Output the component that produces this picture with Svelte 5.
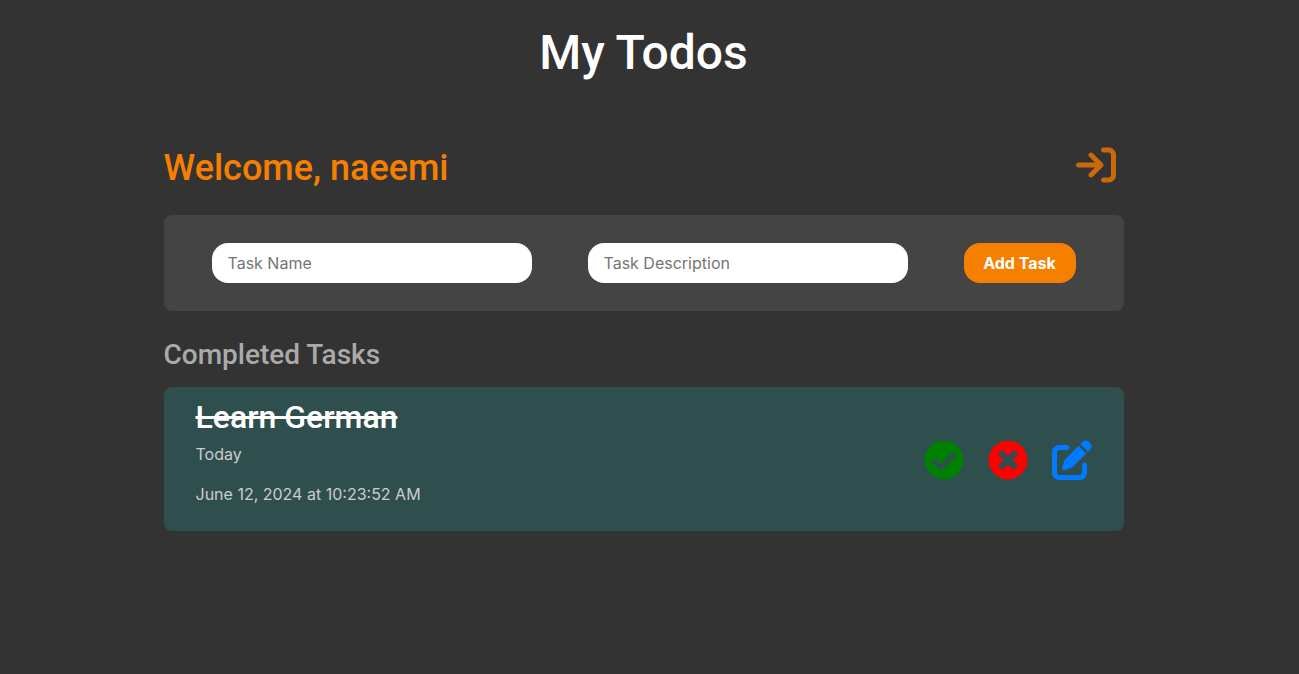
<script>
	let name = '';
	let description = '';
	let nextId = 2;

	let todos = [
		{
			id: 1,
			name: 'Learn German',
			description: 'Today',
			date: 'June 12, 2024 at 10:23:52 AM',
			completed: true
		}
	];

	$: pending = todos.filter((todo) => !todo.completed);
	$: completed = todos.filter((todo) => todo.completed);
	$: sections = [
		{ title: 'Tasks', items: pending },
		{ title: 'Completed Tasks', items: completed }
	].filter((section) => section.items.length > 0);

	function addTask() {
		if (!name.trim()) return;
		const now = new Date();
		const day = now.toLocaleDateString('en-US', { dateStyle: 'long' });
		const time = now.toLocaleTimeString('en-US');
		todos = [...todos, { id: nextId++, name, description, date: `${day} at ${time}`, completed: false }];
		name = '';
		description = '';
	}

	function toggleTask(id) {
		todos = todos.map((todo) => (todo.id === id ? { ...todo, completed: !todo.completed } : todo));
	}

	function removeTask(id) {
		todos = todos.filter((todo) => todo.id !== id);
	}

	function editTask(todo) {
		name = todo.name;
		description = todo.description;
		removeTask(todo.id);
	}
</script>

<main>
	<h1>My Todos</h1>

	<div class="container">
		<header class="welcome">
			<h2>Welcome, naeemi</h2>
			<button class="icon-button logout" aria-label="Log out">
				<svg viewBox="0 0 512 512" aria-hidden="true">
					<path d="M352 96l64 0c17.7 0 32 14.3 32 32l0 256c0 17.7-14.3 32-32 32l-64 0c-17.7 0-32 14.3-32 32s14.3 32 32 32l64 0c53 0 96-43 96-96l0-256c0-53-43-96-96-96l-64 0c-17.7 0-32 14.3-32 32s14.3 32 32 32zm-9.4 182.6c12.5-12.5 12.5-32.8 0-45.3l-128-128c-12.5-12.5-32.8-12.5-45.3 0s-12.5 32.8 0 45.3L242.7 224 32 224c-17.7 0-32 14.3-32 32s14.3 32 32 32l210.7 0-73.4 73.4c-12.5 12.5-12.5 32.8 0 45.3s32.8 12.5 45.3 0l128-128z" />
				</svg>
			</button>
		</header>

		<form class="task-form" on:submit|preventDefault={addTask}>
			<input type="text" placeholder="Task Name" aria-label="Task Name" bind:value={name} />
			<input type="text" placeholder="Task Description" aria-label="Task Description" bind:value={description} />
			<button type="submit" class="add-button">Add Task</button>
		</form>

		{#each sections as section}
			<section>
				<h3>{section.title}</h3>
				<ul>
					{#each section.items as todo (todo.id)}
						<li class="todo" class:completed={todo.completed}>
							<div class="details">
								<h4>{todo.name}</h4>
								<p>{todo.description}</p>
								<p>{todo.date}</p>
							</div>
							<div class="actions">
								<button class="icon-button check" aria-label="Toggle task" on:click={() => toggleTask(todo.id)}>
									<svg viewBox="0 0 512 512" aria-hidden="true">
										<path d="M504 256c0 136.967-111.033 248-248 248S8 392.967 8 256 119.033 8 256 8s248 111.033 248 248zM227.314 387.314l184-184c6.248-6.248 6.248-16.379 0-22.627l-22.627-22.627c-6.248-6.249-16.379-6.249-22.628 0L216 308.118l-70.059-70.059c-6.248-6.248-16.379-6.248-22.628 0l-22.627 22.627c-6.248 6.248-6.248 16.379 0 22.627l104 104c6.249 6.249 16.379 6.249 22.628.001z" />
									</svg>
								</button>
								<button class="icon-button remove" aria-label="Delete task" on:click={() => removeTask(todo.id)}>
									<svg viewBox="0 0 512 512" aria-hidden="true">
										<path d="M256 8C119 8 8 119 8 256s111 248 248 248 248-111 248-248S393 8 256 8zm121.6 313.1c4.7 4.7 4.7 12.3 0 17L338 377.6c-4.7 4.7-12.3 4.7-17 0L256 312l-65.1 65.6c-4.7 4.7-12.3 4.7-17 0L134.4 338c-4.7-4.7-4.7-12.3 0-17l65.6-65-65.6-65.1c-4.7-4.7-4.7-12.3 0-17l39.6-39.6c4.7-4.7 12.3-4.7 17 0l65 65.7 65.1-65.6c4.7-4.7 12.3-4.7 17 0l39.6 39.6c4.7 4.7 4.7 12.3 0 17L312 256l65.6 65.1z" />
									</svg>
								</button>
								<button class="icon-button edit" aria-label="Edit task" on:click={() => editTask(todo)}>
									<svg viewBox="0 0 512 512" aria-hidden="true">
										<path d="M471.6 21.7c-21.9-21.9-57.3-21.9-79.2 0L362.3 51.7l97.9 97.9 30.1-30.1c21.9-21.9 21.9-57.3 0-79.2L471.6 21.7zm-299.2 220c-6.1 6.1-10.8 13.6-13.5 21.9l-29.6 88.8c-2.9 8.6-.6 18.1 5.8 24.6s15.9 8.7 24.6 5.8l88.8-29.6c8.2-2.7 15.7-7.4 21.9-13.5L437.7 172.3 339.7 74.3 172.4 241.7zM96 64C43 64 0 107 0 160V416c0 53 43 96 96 96H352c53 0 96-43 96-96V320c0-17.7-14.3-32-32-32s-32 14.3-32 32v96c0 17.7-14.3 32-32 32H96c-17.7 0-32-14.3-32-32V160c0-17.7 14.3-32 32-32h96c17.7 0 32-14.3 32-32s-14.3-32-32-32H96z" />
									</svg>
								</button>
							</div>
						</li>
					{/each}
				</ul>
			</section>
		{/each}
	</div>
</main>

<style>
	:global(body) {
		background: #333;
	}

	main {
		padding: 25px 12px 24px 0;
		font-family: Inter, sans-serif;
		font-size: 16px;
		line-height: 24px;
		color: #fff;
	}

	h1,
	h2,
	h3,
	h4,
	p,
	ul {
		margin: 0;
		padding: 0;
	}

	h1,
	h2,
	h3,
	h4 {
		font-family: Roboto, sans-serif;
		font-weight: 500;
	}

	h1 {
		font-size: 48px;
		line-height: 56px;
		text-align: center;
	}

	.container {
		max-width: 960px;
		margin: 64px auto 0;
	}

	.welcome {
		display: flex;
		align-items: flex-start;
		justify-content: space-between;
		padding-right: 8px;
		margin-bottom: 24px;
	}

	h2 {
		font-size: 36px;
		line-height: 46px;
		color: #f77f00;
	}

	.icon-button {
		width: 40px;
		height: 40px;
		padding: 0;
		border: none;
		background: none;
		cursor: pointer;
	}

	.icon-button svg {
		display: block;
		width: 40px;
		height: 40px;
		fill: currentColor;
	}

	.logout {
		color: #cc6a08;
	}

	.task-form {
		display: flex;
		align-items: center;
		gap: 56px;
		padding: 28px 48px;
		border-radius: 8px;
		background: #444;
	}

	input {
		flex: 1;
		min-width: 0;
		height: 40px;
		box-sizing: border-box;
		padding: 0 16px;
		border: none;
		border-radius: 16px;
		background: #fff;
		font: inherit;
		color: #333;
	}

	input::placeholder {
		color: #757575;
	}

	.add-button {
		width: 112px;
		height: 40px;
		padding: 0;
		border: none;
		border-radius: 16px;
		background: #f77f00;
		font: inherit;
		font-weight: 700;
		color: #fff;
		cursor: pointer;
	}

	h3 {
		margin: 24px 0 12px;
		font-size: 28px;
		line-height: 40px;
		color: #aaa;
	}

	ul {
		display: grid;
		gap: 16px;
		list-style: none;
	}

	.todo {
		display: flex;
		align-items: center;
		justify-content: space-between;
		padding: 10px 32px 25px;
		border-radius: 8px;
		background: #444;
	}

	.todo.completed {
		background: #2f4f4f;
	}

	.completed h4 {
		text-decoration: line-through;
	}

	h4 {
		font-size: 32px;
		line-height: 40px;
	}

	.details p {
		margin-top: 5px;
		color: #ccc;
	}

	.details p + p {
		margin-top: 16px;
	}

	.actions {
		display: flex;
		gap: 24px;
		padding-top: 16px;
	}

	.check {
		color: #008000;
	}

	.remove {
		color: #f00;
	}

	.edit {
		color: #007bff;
	}
</style>
